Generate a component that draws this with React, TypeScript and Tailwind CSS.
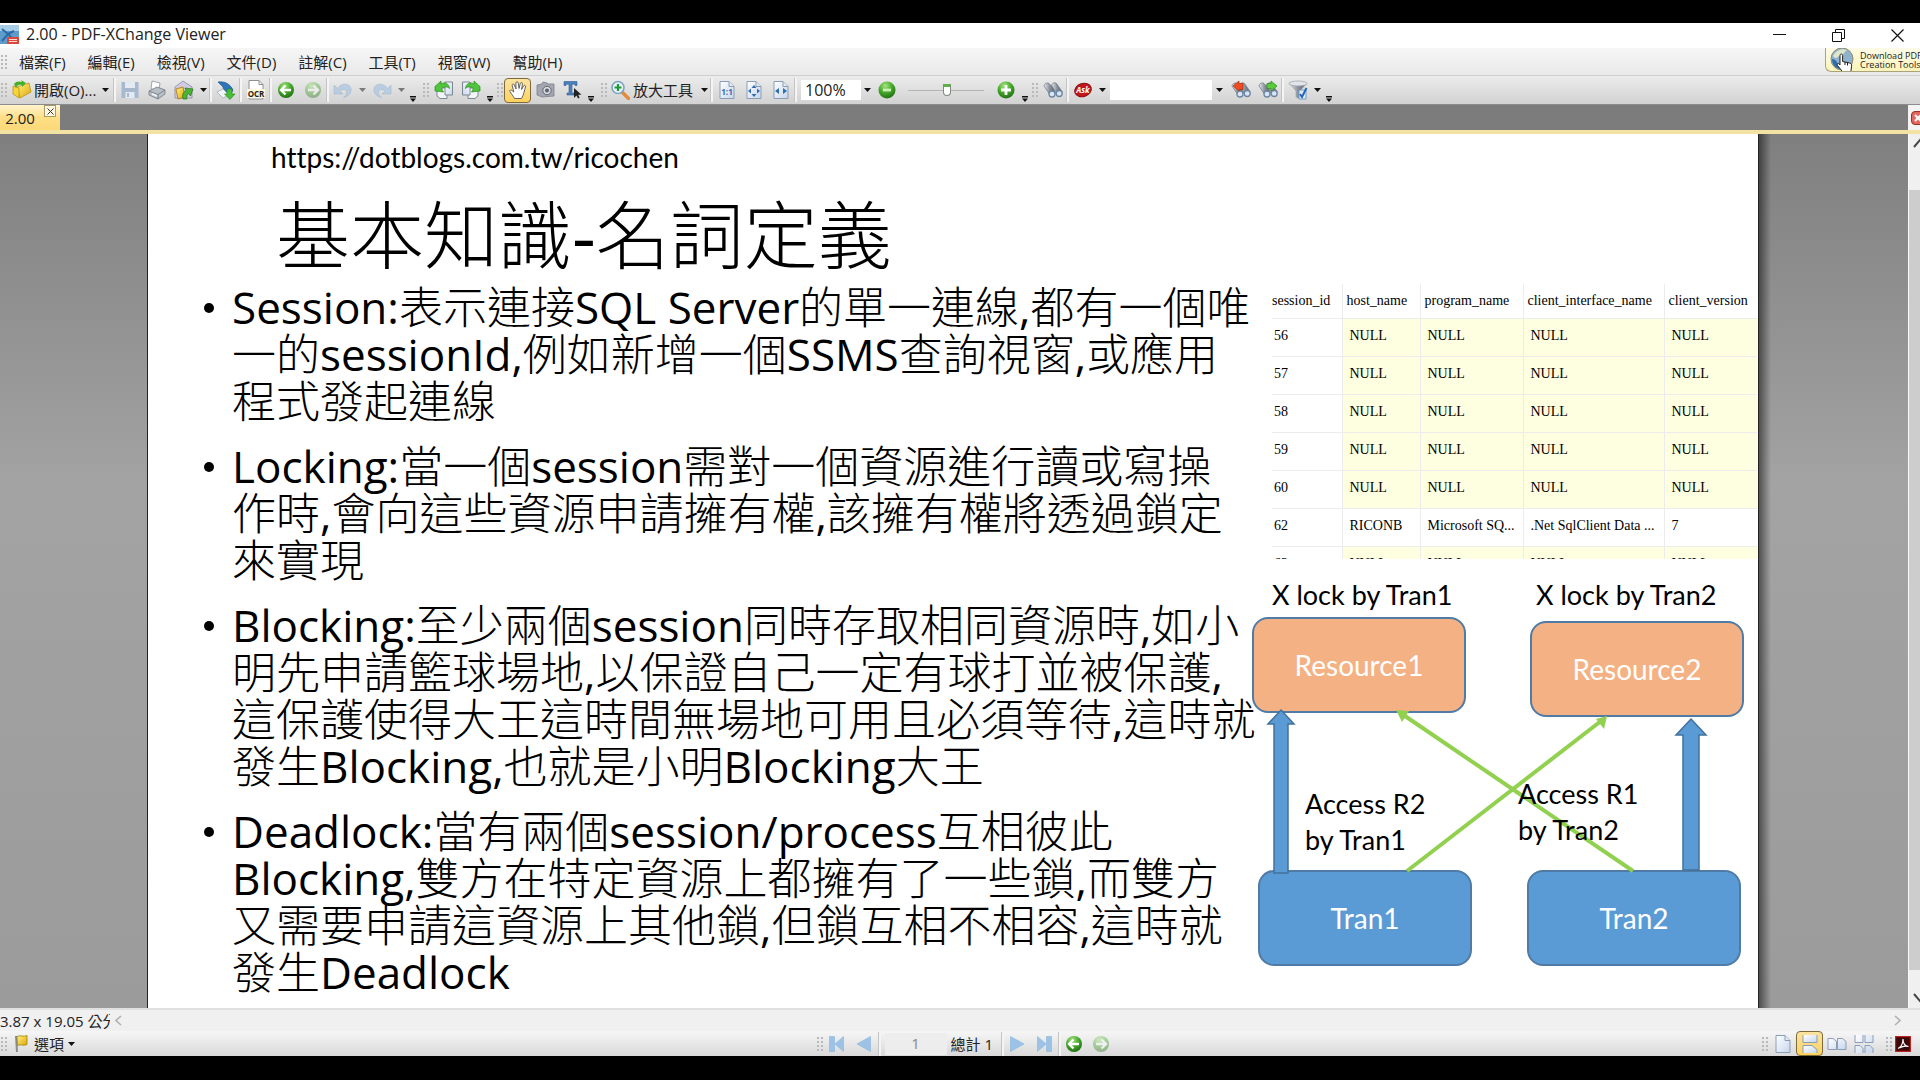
import type { ReactNode } from 'react'

const MENUS = ['檔案(F)', '編輯(E)', '檢視(V)', '文件(D)', '註解(C)', '工具(T)', '視窗(W)', '幫助(H)']

const BULLETS = [
  ['Session:表示連接SQL Server的單一連線,都有一個唯', '一的sessionId,例如新增一個SSMS查詢視窗,或應用', '程式發起連線'],
  ['Locking:當一個session需對一個資源進行讀或寫操', '作時,會向這些資源申請擁有權,該擁有權將透過鎖定', '來實現'],
  [
    'Blocking:至少兩個session同時存取相同資源時,如小',
    '明先申請籃球場地,以保證自己一定有球打並被保護,',
    '這保護使得大王這時間無場地可用且必須等待,這時就',
    '發生Blocking,也就是小明Blocking大王',
  ],
  [
    'Deadlock:當有兩個session/process互相彼此',
    'Blocking,雙方在特定資源上都擁有了一些鎖,而雙方',
    '又需要申請這資源上其他鎖,但鎖互相不相容,這時就',
    '發生Deadlock',
  ],
]

const COLUMNS = [
  { name: 'session_id', width: 'w-[70px]' },
  { name: 'host_name', width: 'w-[78px]' },
  { name: 'program_name', width: 'w-[103px]' },
  { name: 'client_interface_name', width: 'w-[141px]' },
  { name: 'client_version', width: 'w-[93px]' },
]

const ROWS = [
  ['56', 'NULL', 'NULL', 'NULL', 'NULL'],
  ['57', 'NULL', 'NULL', 'NULL', 'NULL'],
  ['58', 'NULL', 'NULL', 'NULL', 'NULL'],
  ['59', 'NULL', 'NULL', 'NULL', 'NULL'],
  ['60', 'NULL', 'NULL', 'NULL', 'NULL'],
  ['62', 'RICONB', 'Microsoft SQ...', '.Net SqlClient Data ...', '7'],
  ['63', 'NULL', 'NULL', 'NULL', 'NULL'],
]

/* ---------- toolbar parts ---------- */

function Grip({ className = '' }: { className?: string }) {
  return (
    <svg className={`shrink-0 w-2 h-4 ${className}`} viewBox="0 0 8 16" fill="#b9b9b9">
      {[2, 6, 10, 14].map(y => (
        <g key={y}>
          <rect x="1" y={y - 1} width="2" height="2" />
          <rect x="5" y={y - 1} width="2" height="2" />
        </g>
      ))}
    </svg>
  )
}

function Sep() {
  return <div className="shrink-0 w-[3px] h-6 border-l border-[#c4c4c4] bg-[#f4f4f4]" />
}

function Caret({ dim = false, wide = false }: { dim?: boolean; wide?: boolean }) {
  return (
    <button aria-label="more" className={`shrink-0 h-6 flex items-center justify-center ${wide ? 'w-[15px]' : 'w-3'}`}>
      <svg width="7" height="4" viewBox="0 0 7 4"><path d="M0 0h7L3.500 4z" fill={dim ? '#7a7a7a' : '#111'} /></svg>
    </button>
  )
}

function Overflow() {
  return (
    <button aria-label="toolbar options" className="shrink-0 w-3 h-6 flex items-end justify-center">
      <svg width="6" height="6" viewBox="0 0 6 6" fill="#111"><path d="M0 0h6v1.500H0zM0 2.500h6L3 6z" /></svg>
    </button>
  )
}

function Tool({ label, active = false, children }: { label: string; active?: boolean; children: ReactNode }) {
  return (
    <button
      aria-label={label}
      className={`shrink-0 w-[27px] h-[25px] flex items-center justify-center
                  ${active ? 'rounded-sm border border-[#7d6a3a] bg-linear-to-b from-[#fbe3a0] to-[#ffd25c]' : ''}`}>
      {children}
    </button>
  )
}

function Svg({ children, w = 20 }: { children: ReactNode; w?: number }) {
  return <svg width={w} height="20" viewBox={`0 0 ${w} 20`} fill="none" className="shrink-0">{children}</svg>
}

/* ---------- icons ---------- */

function Defs() {
  return (
    <svg width="0" height="0" className="absolute">
      <defs>
        <radialGradient id="ball" cx="0.4" cy="0.25" r="0.8">
          <stop offset="0" stopColor="#a4e57e" />
          <stop offset="0.5" stopColor="#45a82a" />
          <stop offset="1" stopColor="#1c6b12" />
        </radialGradient>
        <linearGradient id="sheet" x1="0" y1="0" x2="1" y2="1">
          <stop offset="0" stopColor="#ffffff" />
          <stop offset="1" stopColor="#c6d6ec" />
        </linearGradient>
        <linearGradient id="gold" x1="0" y1="0" x2="1" y2="1">
          <stop offset="0" stopColor="#fff08a" />
          <stop offset="1" stopColor="#e0a800" />
        </linearGradient>
        <linearGradient id="metal" x1="0" y1="0" x2="1" y2="0">
          <stop offset="0" stopColor="#e9edf2" />
          <stop offset="0.5" stopColor="#8a929c" />
          <stop offset="1" stopColor="#5c636c" />
        </linearGradient>
      </defs>
    </svg>
  )
}

function ArrowBall({ right = false, dim = false }: { right?: boolean; dim?: boolean }) {
  return (
    <Svg>
      <g opacity={dim ? 0.4 : 1}>
        <circle cx="10" cy="10" r="8" fill="url(#ball)" />
        <path d={right ? 'M5 10h9M10.500 5.500L15 10l-4.500 4.500' : 'M15 10H6M9.500 5.500L5 10l4.500 4.500'} stroke="#fff" strokeWidth="2.400" />
      </g>
    </Svg>
  )
}

function ZoomBall({ plus = false }: { plus?: boolean }) {
  return (
    <Svg>
      <circle cx="10" cy="10" r="8.500" fill="url(#ball)" />
      <path d={plus ? 'M5 10h10M10 5v10' : 'M6 10h8'} stroke={plus ? '#fff' : '#c9f0b4'} strokeWidth="2.800" />
    </Svg>
  )
}

function Page({ children }: { children?: ReactNode }) {
  return (
    <Svg>
      <path d="M3 1.500h9l5 5v12H3z" fill="url(#sheet)" stroke="#8b9db5" />
      <path d="M12 1.500v5h5" fill="#dfe8f3" stroke="#8b9db5" />
      {children}
    </Svg>
  )
}

function Binoculars({ children }: { children?: ReactNode }) {
  return (
    <Svg>
      <path d="M1 6c0-2 3-4 5-2.500l6 6.500-4.500 5.500z" fill="url(#metal)" stroke="#6a717b" strokeWidth="0.700" />
      <path d="M8.500 5c1-2 3.500-3 5-1.500l5.500 8-4.500 4.500z" fill="url(#metal)" stroke="#6a717b" strokeWidth="0.700" />
      <circle cx="9" cy="14" r="3" fill="#d6e6f6" stroke="#6d84a0" strokeWidth="1.300" />
      <circle cx="16.200" cy="13.500" r="3" fill="#d6e6f6" stroke="#6d84a0" strokeWidth="1.300" />
      {children}
    </Svg>
  )
}

function RotatePage({ flip = false }: { flip?: boolean }) {
  return (
    <Svg>
      <g transform={flip ? 'translate(20 0) scale(-1 1)' : undefined}>
        <path d="M3 8h10v10.500H6L3 16z" fill="#f2f5f8" stroke="#7c8794" />
        <path d="M11 2h7.500v13H11z" fill="url(#sheet)" stroke="#7c8794" />
        <path d="M1 6.500L7 1v3c4-2.500 8-.5 8.500 4.500-2.500-2.500-5.500-1.500-8 0l2 3.500L1 11z" fill="#4fc43c" stroke="#2d8a22" strokeWidth="0.700" />
      </g>
    </Svg>
  )
}

function Undo({ flip = false }: { flip?: boolean }) {
  return (
    <Svg>
      <g transform={flip ? 'translate(20 0) scale(-1 1)' : undefined}>
        <path d="M1 5v9h9L7 11.500c2-3 6-2.500 6.500 0 .4 2-1 4.500-3 6 5-1 8-4.500 7.500-8.500C17.500 3.500 9 2 4.500 8.500z" fill="#bacde0" stroke="#a3b8ce" strokeWidth="0.600" />
      </g>
    </Svg>
  )
}

function Hand() {
  return (
    <Svg>
      <path
        d="M6.500 18.500C5 15.500 3 13.500 2 11.500c-.6-1.500 1-2 2-1l1.800 1.500L4.200 5.500c-.4-1.600 1.500-2.200 2.100-.6L8 9 7.900 3c0-1.700 2-1.800 2.300-.2L11 8.500l1.300-5c.4-1.500 2.300-1.200 2.100.4l-.8 5.600 1.900-3.500c.8-1.300 2.500-.5 2 .9-1.200 3.600-1.700 8-4 11.600z"
        fill="#fff" stroke="#555" strokeWidth="0.900" />
    </Svg>
  )
}

function NavArrow({ right = false, bar = false }: { right?: boolean; bar?: boolean }) {
  return (
    <Svg>
      <g transform={right ? 'translate(20 0) scale(-1 1)' : undefined} fill="#9cc3e6" stroke="#8ab3da" strokeWidth="0.600">
        {bar && <path d="M2.500 2.500h5v15h-5z" />}
        {bar ? <path d="M16.500 2.500v15L8 10z" /> : <path d="M16.500 2.500v15L3 10z" />}
      </g>
    </Svg>
  )
}

/* ---------- window chrome ---------- */

function TitleBar() {
  return (
    <header className="shrink-0 flex items-start h-[25px] bg-white">
      <svg width="20" height="20" viewBox="0 0 20 20" className="shrink-0 mt-0.5">
        <rect width="19" height="19" x="0" y="0" fill="#5f9bcb" />
        <path d="M0 0h19v6H0z" fill="#a9cfe8" />
        <path d="M2 4l6 5 6-3M2 16l6-7 4 4" stroke="#2c6ba5" strokeWidth="2" fill="none" />
        <path d="M7 12h12v7H7z" fill="#d9483b" />
        <path d="M9 14.500h8M9 16.500h8" stroke="#f7d9d5" />
      </svg>
      <h1 className="pl-1.5 text-[16px] leading-[22px] text-[#222] whitespace-nowrap">2.00 - PDF-XChange Viewer</h1>
      <div className="ml-auto flex pr-[7px] gap-[27px]">
        <button aria-label="minimize" className="w-8 h-6 flex items-center justify-center">
          <svg width="13" height="13" viewBox="0 0 13 13"><path d="M0 5.500h13" stroke="#111" /></svg>
        </button>
        <button aria-label="restore" className="w-8 h-6 flex items-center justify-center">
          <svg width="13" height="13" viewBox="0 0 13 13" fill="none" stroke="#111"><path d="M.5 3.500h9v9h-9zM3.500 3.500v-3h9v9h-3" /></svg>
        </button>
        <button aria-label="close" className="w-8 h-6 flex items-center justify-center">
          <svg width="13" height="13" viewBox="0 0 13 13" stroke="#111" strokeWidth="1.200"><path d="M.5.5l12 12M12.500.5l-12 12" /></svg>
        </button>
      </div>
    </header>
  )
}

function MenuBar() {
  return (
    <nav className="shrink-0 flex items-center h-7 bg-linear-to-b from-[#f6f6f6] to-[#e9e9e9] border-b border-[#cfcfcf]">
      <Grip className="mr-[11px]" />
      <div className="flex gap-[22px]">
        {MENUS.map(m => (
          <button key={m} className="text-[15px] leading-6 text-[#222] whitespace-nowrap">{m}</button>
        ))}
      </div>
      <a href="#tools" className="ml-auto self-start flex items-center w-[95px] h-6 pl-1 overflow-hidden rounded-bl-md
                                  border-l border-b border-[#a9a27a] bg-linear-to-b from-[#fdfbe9] to-[#fbf4b8]">
        <svg width="26" height="27" viewBox="0 0 26 27" className="shrink-0 overflow-visible">
          <circle cx="12" cy="13" r="11" fill="#8fb2cf" stroke="#8d8a70" />
          <path d="M3 10c3-6 9-8 14-6-4 3-3 5-7 6s-3 4-7 0z" fill="#dfe6c8" />
          <path d="M2 13c5 0 6 6 9 10-5 0-9-4-9-10z" fill="#2f6ea6" />
          <path d="M10 9.500c0-2 2.600-2 2.600 0v6l7 1.500c1.800.5 2.200 1.600 2 3.200l-.8 5.800h-8L7.500 19.500c-1-1.500.6-2.500 1.600-1.600l.9 1z" fill="#fff" stroke="#222" />
          <path d="M15 16v3M17.500 16.500v3" stroke="#222" />
        </svg>
        <span className="pl-1 text-[9px] leading-[9px] text-[#222] whitespace-nowrap">Download PDF<br />Creation Tools</span>
      </a>
    </nav>
  )
}

function ToolBar() {
  return (
    <div className="shrink-0 flex items-center h-[29px] bg-linear-to-b from-[#ececec] to-[#d2d2d2] border-b border-[#8c8c8c] overflow-hidden">
      <Grip />
      <button className="shrink-0 flex items-center w-[90px] pl-1 text-[15px] leading-6 text-[#222] whitespace-nowrap">
        <Svg>
          <path d="M5 7l12-4 2 9-11 6z" fill="url(#gold)" stroke="#b58a10" strokeWidth="0.700" />
          <path d="M1 6l6 2v10l-6-4z" fill="#f6d53a" stroke="#b58a10" strokeWidth="0.700" />
          <path d="M2 4c2-3 5-3 8-2L9 0l5 3-4 4V5C7 4 5 5 4 8z" fill="#43b02a" />
        </Svg>
        <span className="pl-0.5">開啟(O)...</span>
      </button>
      <Caret wide />
      <Sep />
      <Tool label="save">
        <Svg>
          <path d="M1.500 2h17v16h-17z" fill="#a7b9cf" />
          <path d="M5 2h10v6H5zM5.500 12h9v6h-9z" fill="#e4eaf1" />
          <path d="M7 13h2v4H7z" fill="#a7b9cf" />
        </Svg>
      </Tool>
      <Tool label="print">
        <Svg>
          <path d="M5 1l8 2-1 7-8-1z" fill="#fff" stroke="#8c939b" strokeWidth="0.800" />
          <path d="M2 11l8-4 8 3v4l-7 5-9-4z" fill="#b9bfc6" stroke="#737a83" strokeWidth="0.800" />
          <path d="M2 11l9 3.500L18 10M11 14.500V19" stroke="#737a83" strokeWidth="0.800" />
          <path d="M5 13l5 2v2l-5-2z" fill="#eef1f4" />
        </Svg>
      </Tool>
      <Tool label="e-mail">
        <Svg>
          <path d="M1 7l8-6 9 6v11H1z" fill="#cfcbe2" stroke="#8e88a8" strokeWidth="0.800" />
          <path d="M2 9l7-2 2 10-7 2z" fill="url(#gold)" stroke="#a8720c" strokeWidth="0.800" />
          <path d="M9 19c-1-4 0-7 3-8.500L11 8l8 1-2.500 7-2-2.500c-1.500 1-2 3-1.500 5.500z" fill="#4cb233" stroke="#27711a" strokeWidth="0.700" />
        </Svg>
      </Tool>
      <Caret />
      <Sep />
      <Tool label="export">
        <Svg>
          <path d="M2 2c7-1 12 2 15 8l-3 5C10 13 7 10 7 7z" fill="#2d75b8" stroke="#1c4e80" strokeWidth="0.600" />
          <path d="M1 12l6-3 6 6-6 3z" fill="#f4f6f8" stroke="#9aa4ae" strokeWidth="0.700" />
          <path d="M11 9h5v5h3l-5 5.500L8.500 14H11z" fill="#46bf34" stroke="#23801a" strokeWidth="0.600" />
        </Svg>
      </Tool>
      <Sep />
      <Tool label="OCR">
        <Svg>
          <path d="M3 .5h10l4 4V19H3z" fill="#fff" stroke="#8f8f8f" />
          <path d="M13 .5v4h4" stroke="#8f8f8f" />
          <rect x="1" y="9" width="18" height="9" fill="#fff6dc" />
          <text x="10" y="17" textAnchor="middle" fontSize="8" fontWeight="700" fill="#222">OCR</text>
        </Svg>
      </Tool>
      <Sep />
      <Tool label="previous view"><ArrowBall /></Tool>
      <Tool label="next view"><ArrowBall right dim /></Tool>
      <Sep />
      <Tool label="undo"><Undo /></Tool>
      <Caret dim />
      <Tool label="redo"><Undo flip /></Tool>
      <Caret dim />
      <Overflow />
      <Grip className="ml-[3px]" />
      <Tool label="rotate left"><RotatePage /></Tool>
      <Tool label="rotate right"><RotatePage flip /></Tool>
      <Overflow />
      <Grip />
      <Tool label="hand tool" active><Hand /></Tool>
      <Tool label="snapshot">
        <Svg>
          <path d="M2 5l5-1 1-2 4 1 1 1h6v12l-12 1-5-2z" fill="#a3a5b0" stroke="#7c7f8c" strokeWidth="0.800" />
          <circle cx="12" cy="10.500" r="4.200" fill="#d5d7df" stroke="#666" />
          <circle cx="12" cy="10.500" r="2" fill="#5a6070" />
        </Svg>
      </Tool>
      <Tool label="select text">
        <Svg>
          <path d="M2 1.500h13v4h-2V4.200h-3V13h2v2H5v-2h2V4.200H4v1.300H2z" fill="#4a80bd" stroke="#2f5e94" strokeWidth="0.600" />
          <path d="M12 8v10l2.500-2.500 1.500 3 1.600-.8-1.400-2.900h3.300z" fill="#222" />
        </Svg>
      </Tool>
      <Overflow />
      <Grip className="ml-[3px]" />
      <button className="shrink-0 flex items-center w-[90px] pl-0.5 text-[15px] leading-6 text-[#222] whitespace-nowrap">
        <Svg>
          <path d="M12 12l6.500 6.500" stroke="#e48a3a" strokeWidth="3.500" strokeLinecap="round" />
          <circle cx="8" cy="7.500" r="6" fill="#e6f3fb" stroke="#7fa3bd" strokeWidth="1.600" />
          <path d="M4.500 7.500h7M8 4v7" stroke="#1d9a35" strokeWidth="2.200" />
        </Svg>
        <span className="pl-[3px]">放大工具</span>
      </button>
      <Caret />
      <Sep />
      <Tool label="actual size">
        <Page><text x="10" y="15" textAnchor="middle" fontSize="8" fontWeight="700" fill="#2d6db0">1:1</text></Page>
      </Tool>
      <Tool label="fit page">
        <Page><path d="M10 5l2.500 3h-5zM10 17l2.500-3h-5zM4 11l3-2.500v5zM16 11l-3-2.500v5z" fill="#2d6db0" /></Page>
      </Tool>
      <Tool label="fit width">
        <Page><path d="M4 11l4-3v6zM16 11l-4-3v6z" fill="#2d6db0" /></Page>
      </Tool>
      <Sep />
      <input aria-label="zoom" defaultValue="100%" className="shrink-0 w-[60px] h-5 ml-1 pl-1 bg-white text-[16px] text-[#222] outline-none" />
      <Caret />
      <Tool label="zoom out"><ZoomBall /></Tool>
      <input
        aria-label="zoom level" type="range" defaultValue={52}
        className="shrink-0 w-[76px] h-5 mx-2 appearance-none bg-transparent
                   [&::-webkit-slider-runnable-track]:h-px [&::-webkit-slider-runnable-track]:bg-[#b4b4b4]
                   [&::-webkit-slider-thumb]:appearance-none [&::-webkit-slider-thumb]:w-2 [&::-webkit-slider-thumb]:h-3
                   [&::-webkit-slider-thumb]:-mt-1.5 [&::-webkit-slider-thumb]:rounded-b [&::-webkit-slider-thumb]:border
                   [&::-webkit-slider-thumb]:border-[#7d8a7d] [&::-webkit-slider-thumb]:bg-white
                   [&::-webkit-slider-thumb]:border-t-3 [&::-webkit-slider-thumb]:border-t-[#5fb04a]" />
      <Tool label="zoom in"><ZoomBall plus /></Tool>
      <Overflow />
      <Grip />
      <Tool label="find"><Binoculars /></Tool>
      <Sep />
      <Tool label="ask">
        <Svg>
          <ellipse cx="10" cy="10" rx="8.500" ry="6.500" transform="rotate(-18 10 10)" fill="#c3161c" stroke="#8d0d12" />
          <text x="10" y="13" textAnchor="middle" fontSize="8" fontWeight="700" fontStyle="italic" fill="#fff">Ask</text>
        </Svg>
      </Tool>
      <Caret />
      <input aria-label="search text" className="shrink-0 w-[102px] h-5 bg-white px-1 ml-0.5 text-[15px] outline-none" />
      <Caret wide />
      <Tool label="find previous">
        <Binoculars><path d="M2 6l6-5v2.500h4v6H8V11z" fill="#ee4b22" stroke="#b02e0d" strokeWidth="0.700" /></Binoculars>
      </Tool>
      <Tool label="find next">
        <Binoculars><path d="M19 6l-6-5v2.500H9v5h4V11z" fill="#58cc3c" stroke="#2b8c1b" strokeWidth="0.700" /></Binoculars>
      </Tool>
      <Sep />
      <Tool label="filter">
        <Svg>
          <path d="M1 3l7 8v6l4 2v-8l7-8z" fill="url(#metal)" stroke="#9a9fa6" strokeWidth="0.600" />
          <ellipse cx="10" cy="3.500" rx="9" ry="2.500" fill="#e2e5e9" stroke="#9a9fa6" strokeWidth="0.700" />
          <path d="M11 10h7v9h-7z" fill="#dfeaf8" stroke="#5d8fc9" strokeWidth="0.800" />
          <path d="M12 14l2 3L18.500 8" stroke="#2467b5" strokeWidth="2" />
        </Svg>
      </Tool>
      <Caret />
      <Overflow />
    </div>
  )
}

function TabStrip() {
  return (
    <div className="shrink-0 flex h-[29px] bg-[#7c7c7c] border-b-4 border-[#f3e3a3]">
      <div className="flex w-[60px] h-full bg-linear-to-b from-[#fff3cf] via-[#ffdf86] to-[#fbd978]">
        <button className="w-10 text-center text-[15px] leading-[26px] text-[#222]">2.00</button>
        <button aria-label="close tab" className="w-3 h-3 ml-1 flex items-center justify-center border border-[#a89868] bg-[#fff8e0]">
          <svg width="7" height="7" viewBox="0 0 7 7"><path d="M.5.5l6 6M6.500.5l-6 6" stroke="#333" /></svg>
        </button>
      </div>
      <div className="ml-auto w-3 flex items-center bg-[#f4f4f4] overflow-hidden">
        <button aria-label="close document" className="shrink-0 ml-[3px] w-[15px] h-[14px] rounded-sm border border-[#9c2f28] bg-[#e0685e]">
          <svg width="13" height="12" viewBox="0 0 13 12"><path d="M3 3l6 6M9 3l-6 6" stroke="#fff" strokeWidth="2" /></svg>
        </button>
      </div>
    </div>
  )
}

/* ---------- slide ---------- */

function SessionTable() {
  return (
    <div className="h-[275px] ml-5 overflow-hidden">
      <table className="w-[485px] table-fixed border-collapse text-left font-['Liberation_Serif','Noto_Sans_CJK_TC',serif] text-[14px] leading-5 text-black">
        <thead>
          <tr className="h-[34px]">
            {COLUMNS.map((c, i) => (
              <th key={c.name} className={`font-normal whitespace-nowrap ${c.width} ${i ? 'pl-1 border-l border-[#ececec]' : ''}`}>{c.name}</th>
            ))}
          </tr>
        </thead>
        <tbody>
          {ROWS.map(row => (
            <tr key={row[0]} className="h-[38px] border-t border-[#ececec]">
              {row.map((cell, i) => (
                <td
                  key={i}
                  className={`pt-[7px] align-top whitespace-nowrap ${i ? 'pl-[7px] border-l border-[#ececec]' : 'pl-0.5'}
                              ${cell === 'NULL' ? 'bg-[#feffe1]' : ''}`}>
                  {cell}
                </td>
              ))}
            </tr>
          ))}
        </tbody>
      </table>
    </div>
  )
}

function LockDiagram() {
  const box = 'absolute w-[214px] h-24 flex items-center justify-center rounded-2xl border-2 border-[#4f7ba6] text-[28px] text-white'
  const label = 'absolute text-[27px] whitespace-nowrap'
  return (
    <div className="relative h-[448px] font-['Lato','Noto_Sans_CJK_TC',sans-serif] leading-9 text-black">
      <div className={`${box} left-0 top-[58px] bg-[#f4b183]`}>Resource1</div>
      <div className={`${box} left-[278px] top-[62px] bg-[#f4b183]`}>Resource2</div>
      <div className={`${box} left-1.5 top-[311px] bg-[#5b9bd5]`}>Tran1</div>
      <div className={`${box} left-[275px] top-[311px] bg-[#5b9bd5]`}>Tran2</div>

      <svg width="506" height="448" viewBox="0 0 506 448" className="absolute left-0 top-0">
        <path d="M29 151l13 14h-6v149H22V165h-6z" fill="#5b9bd5" stroke="#41719c" strokeWidth="1.500" />
        <path d="M439 160l15 16h-7v135h-16V176h-7z" fill="#5b9bd5" stroke="#41719c" strokeWidth="1.500" />
        <g stroke="#92d050" strokeWidth="4" fill="#92d050">
          <path d="M155 312L349 162" />
          <path d="M381 312L150 155" />
        </g>
        <path d="M355 157l-3 13-8-10z" fill="#92d050" />
        <path d="M144 151l13 1-7 11z" fill="#92d050" />
      </svg>

      <p className={`${label} left-5 top-[18px]`}>X lock by Tran1</p>
      <p className={`${label} left-[284px] top-[18px]`}>X lock by Tran2</p>
      <p className={`${label} left-[53px] top-[227px]`}>Access R2<br />by Tran1</p>
      <p className={`${label} left-[266px] top-[217px]`}>Access R1<br />by Tran2</p>
    </div>
  )
}

function Slide() {
  return (
    <article className="flex-1 min-w-0 bg-white border-x border-[#222] overflow-hidden text-black
                        font-['Open_Sans','Noto_Sans_CJK_TC_Light','Noto_Sans_CJK_TC',sans-serif]">
      <p className="pt-[5px] pl-[123px] font-['Lato','Noto_Sans_CJK_TC',sans-serif] text-[28px] leading-9 [font-variant-ligatures:none]">
        https://dotblogs.com.tw/ricochen
      </p>
      <h2 className="pl-[128px] mt-4 mb-[5px] text-[74px] leading-[88px] whitespace-nowrap">基本知識-名詞定義</h2>
      <div className="flex">
        <ul className="flex-1 min-w-0 pl-14 flex flex-col gap-[18px] text-[44px] leading-[47px]">
          {BULLETS.map(lines => (
            <li key={lines[0]} className="flex">
              <span className="shrink-0 w-7 h-[47px] flex items-center">
                <span className="w-2.5 h-2.5 rounded-full bg-black" />
              </span>
              <p className="whitespace-nowrap">
                {lines.map(line => <span key={line} className="block h-[47px]">{line}</span>)}
              </p>
            </li>
          ))}
        </ul>
        <div className="shrink-0 w-[506px]">
          <SessionTable />
          <LockDiagram />
        </div>
      </div>
    </article>
  )
}

function Viewer() {
  return (
    <main className="flex-1 min-h-0 flex bg-linear-to-b from-[#7f7f7f] via-[#a3a3a3] via-40% to-[#9b9b9b]">
      <div className="shrink-0 w-[147px]" />
      <Slide />
      <div className="shrink-0 w-[149px]">
        <div className="w-3 h-full bg-linear-to-r from-black/50 to-transparent" />
      </div>
      <div className="shrink-0 w-3 flex flex-col bg-[#f0f0f0] border-l border-[#fafafa] overflow-hidden">
        <button aria-label="scroll up" className="h-14 pt-1 flex items-start">
          <svg width="17" height="12" viewBox="0 0 17 12" className="shrink-0 ml-1"><path d="M1 9l6-7 6 7" stroke="#444" strokeWidth="2" fill="none" /></svg>
        </button>
        <div className="flex-1 bg-[#cdcdcd]" />
        <button aria-label="scroll down" className="h-[38px] pb-1 flex items-end">
          <svg width="17" height="12" viewBox="0 0 17 12" className="shrink-0 ml-1"><path d="M1 2l6 7 6-7" stroke="#444" strokeWidth="2" fill="none" /></svg>
        </button>
      </div>
    </main>
  )
}

/* ---------- bottom bars ---------- */

function ScrollRow() {
  return (
    <div className="shrink-0 flex items-center h-[23px] border-t-2 border-[#e0e0e0] bg-[#f0f0f0] text-[15px] leading-5 text-[#222]">
      <span className="w-[110px] overflow-hidden whitespace-nowrap">3.87 x 19.05 公分</span>
      <button aria-label="scroll left" className="ml-1">
        <svg width="8" height="11" viewBox="0 0 8 11"><path d="M7 1L2 5.500 7 10" stroke="#b0b0b0" strokeWidth="1.600" fill="none" /></svg>
      </button>
      <button aria-label="scroll right" className="ml-auto mr-[18px]">
        <svg width="8" height="11" viewBox="0 0 8 11"><path d="M1 1l5 4.500L1 10" stroke="#b0b0b0" strokeWidth="1.600" fill="none" /></svg>
      </button>
    </div>
  )
}

function StatusBar() {
  return (
    <footer className="shrink-0 flex items-center h-[25px] bg-linear-to-b from-[#f6f6f6] to-[#d9d9d9] text-[15px] text-[#222] overflow-hidden">
      <div className="flex-1 flex items-center">
        <Grip />
        <button className="flex items-center pl-1 leading-6">
          <Svg>
            <path d="M4 2l1 16" stroke="#8b8b8b" strokeWidth="2" />
            <path d="M5 2.500c4-2 6 1 10-1v9c-4 2-6-1-9.500 1z" fill="url(#gold)" stroke="#9a8400" strokeWidth="0.800" />
          </Svg>
          <span className="pl-0.5">選項</span>
        </button>
        <Caret wide />
      </div>

      <div className="flex items-center ml-3.5">
        <Grip />
        <Tool label="first page"><NavArrow bar /></Tool>
        <Tool label="previous page"><NavArrow /></Tool>
        <Sep />
        <input aria-label="page number" defaultValue="1" className="w-[62px] h-[22px] mx-1 text-center bg-[#ededed] text-[#888] outline-none" />
        <span className="w-[50px] leading-6 whitespace-nowrap">總計 1</span>
        <Sep />
        <Tool label="next page"><NavArrow right /></Tool>
        <Tool label="last page"><NavArrow right bar /></Tool>
        <Sep />
        <Tool label="back"><ArrowBall /></Tool>
        <Tool label="forward"><ArrowBall right dim /></Tool>
      </div>

      <div className="flex-1 flex items-center justify-end pr-1">
        <Grip />
        <Tool label="single page"><Page /></Tool>
        <Tool label="continuous" active>
          <Svg>
            <path d="M3 1v7.500h14V1" fill="url(#sheet)" stroke="#8b9db5" />
            <path d="M3 19v-7.500h9l5 4V19" fill="url(#sheet)" stroke="#8b9db5" />
          </Svg>
        </Tool>
        <Tool label="facing pages">
          <Svg>
            <path d="M1 4.500h5l3.500 3v8H1zM10.500 4.500h5l3.500 3v8h-8.500z" fill="url(#sheet)" stroke="#8b9db5" />
          </Svg>
        </Tool>
        <Tool label="continuous facing">
          <Svg>
            <path d="M1 1v7.500h8V1M11 1v7.500h8V1M1 19v-7.500h5l3 3V19M11 19v-7.500h5l3 3V19" fill="url(#sheet)" stroke="#8b9db5" />
          </Svg>
        </Tool>
        <Grip className="ml-2 -mr-1" />
        <Tool label="Acrobat">
          <svg width="16" height="16" viewBox="0 0 16 16" fill="none">
            <rect x="0.500" y="0.500" width="15" height="15" fill="#3a0707" stroke="#c0221c" strokeWidth="1.400" />
            <path d="M3 12.500c3-1.500 5-5 5-9.500 0 4 2 7 5.500 7.500-3.500-1-6.500 0-9 1.500" stroke="#fff" strokeWidth="1.200" />
          </svg>
        </Tool>
      </div>
    </footer>
  )
}

export default function App() {
  return (
    <div className="h-screen flex flex-col pt-[23px] pb-6 bg-black overflow-hidden font-['Open_Sans','Noto_Sans_CJK_TC',sans-serif]">
      <Defs />
      <TitleBar />
      <MenuBar />
      <ToolBar />
      <TabStrip />
      <Viewer />
      <ScrollRow />
      <StatusBar />
    </div>
  )
}
